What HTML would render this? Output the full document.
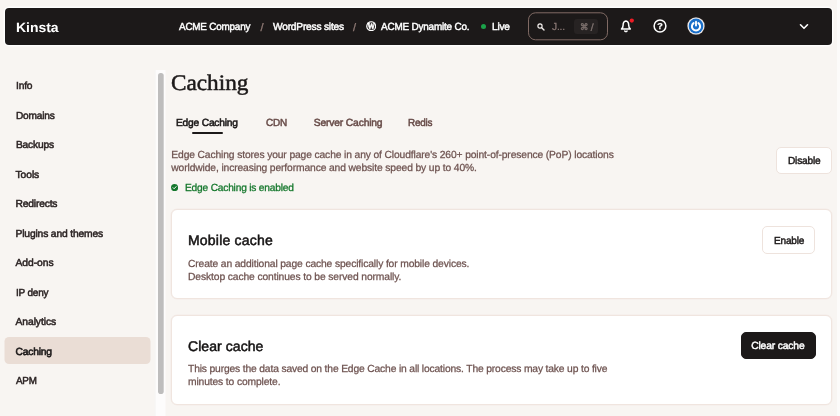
<!DOCTYPE html>
<html><head><meta charset="utf-8"><title>Caching</title>
<style>
*{box-sizing:border-box;margin:0;padding:0}
html,body{width:840px;height:416px;overflow:hidden;background:#f8f5f2}
#root{position:absolute;left:0;top:0;width:840px;height:416px;background:#f8f5f2;font-family:"Liberation Sans",sans-serif;color:#1c1919;will-change:transform;overflow:hidden}
.abs{position:absolute}
.t{position:absolute;white-space:pre;text-rendering:geometricPrecision}
#hdr{position:absolute;left:5px;top:8px;width:827px;height:37px;background:#1c1919;border-radius:4px;box-shadow:0 0 0 1.4px #fefefd}
#search{position:absolute;left:528px;top:12px;width:80px;height:28px;border:1.6px solid #806a64;border-radius:7.5px;transform:translateY(0.3px)}
#kbd{position:absolute;left:574px;top:19px;width:24px;height:15px;background:#272323;border-radius:3px}
#active{position:absolute;left:5px;top:337px;width:146px;height:27px;transform:translateX(-0.5px);background:#eaddd5;border-radius:4.5px}
#track{position:absolute;left:154px;top:70px;width:11px;height:346px;background:#fdfcfc;border-left:1px solid #f3f1ef;transform:translateX(0.5px)}
#sb{position:absolute;left:158px;top:72.5px;width:6px;transform:scaleX(0.95);transform-origin:0 0;height:321.3px;background:#bebdbd;border-radius:2.8px}
#ul{position:absolute;left:191.5px;top:131.8px;width:31px;height:2px;background:#1c1919;border-radius:1px}
.card{position:absolute;left:170.5px;width:661.5px;background:#fff;border:1px solid #f0e5df;border-radius:6px;box-shadow:0 0 0 0.5px #f4ece8}
.btn{position:absolute;background:#fff;border:1px solid #eee3dd;border-radius:5px}
.btn.dark{background:#1c1919;border-color:#1c1919}
#rstrip{position:absolute;left:836.7px;top:0;width:3.3px;height:416px;background:#fcfbfa}
</style></head><body><div id="root">
<div id="rstrip"></div>
<div id="hdr"></div>
<div id="search"></div><div id="kbd"></div>
<svg class="abs" style="left:365.9px;top:21px" width="10.4" height="10.4" viewBox="0 0 10 10"><circle cx="5" cy="5" r="4.3" fill="#3a3636" stroke="#fff" stroke-width="1.1"/><text x="5" y="7.7" font-size="7.6" font-weight="bold" text-anchor="middle" fill="#fff" stroke="#fff" stroke-width="0.35" font-family="Liberation Serif,serif">W</text></svg>
<div class="abs" style="left:481.3px;top:24px;width:5.2px;height:5.2px;border-radius:50%;background:#1ba24a;transform:translateY(-0.1px)"></div>
<svg class="abs" style="left:537.3px;top:22.8px" width="8" height="8" viewBox="0 0 8 8"><circle cx="3" cy="3" r="2.1" fill="none" stroke="#f4f0ee" stroke-width="1.15"/><path d="M4.7 4.7 L7 7" stroke="#f4f0ee" stroke-width="1.35" stroke-linecap="round"/></svg>
<svg class="abs" style="left:618px;top:17px" width="18" height="18" viewBox="0 0 18 18"><path d="M7.9 3.9 C5.7 4.2 5.1 6.2 5.1 8.2 C5.1 10.3 4.4 11.1 3.5 12.1 L12.3 12.1 C11.4 11.1 10.7 10.3 10.7 8.2 C10.7 6.2 10.1 4.2 7.9 3.9 Z" fill="none" stroke="#fff" stroke-width="1.5" stroke-linejoin="round"/><path d="M6.7 14 Q7.9 15.2 9.1 14" fill="none" stroke="#fff" stroke-width="1.4" stroke-linecap="round"/><circle cx="13.8" cy="3.6" r="2.15" fill="#ee1c25"/></svg>
<svg class="abs" style="left:652.6px;top:19.1px" width="14" height="14" viewBox="0 0 14 14"><circle cx="7" cy="7" r="5.9" fill="none" stroke="#fff" stroke-width="1.5"/><text x="7" y="10.1" font-size="9" font-weight="bold" text-anchor="middle" fill="#fff" stroke="#fff" stroke-width="0.25" font-family="Liberation Sans,sans-serif">?</text></svg>
<svg class="abs" style="left:687.2px;top:17.3px" width="18" height="18" viewBox="0 0 18 18"><circle cx="9" cy="9" r="8.7" fill="#cfc4c0"/><circle cx="9" cy="9" r="8.1" fill="#fff"/><circle cx="9" cy="9" r="7.4" fill="#1a6fc9"/><path d="M6.6 6.1 A4.1 4.1 0 1 0 11.4 6.1" fill="none" stroke="#fff" stroke-width="2" stroke-linecap="round"/><path d="M9 4.6 V8.6" stroke="#fff" stroke-width="1.9" stroke-linecap="round"/></svg>
<svg class="abs" style="left:798.5px;top:23px" width="10" height="8" viewBox="0 0 10 8"><path d="M1.5 1.8 L5 5.3 L8.5 1.8" fill="none" stroke="#fff" stroke-width="1.6" stroke-linecap="round" stroke-linejoin="round"/></svg>

<div id="active"></div>
<div id="track"></div>
<div id="sb"></div>
<div id="ul"></div>
<svg class="abs" style="left:171.3px;top:184.2px" width="7.2" height="7.2" viewBox="0 0 8 8"><circle cx="4" cy="4" r="4" fill="#14772c"/><path d="M2.3 4.1 L3.5 5.3 L5.7 2.9" fill="none" stroke="#fff" stroke-width="1.1" stroke-linecap="round" stroke-linejoin="round"/></svg>
<div class="btn" style="left:776px;top:147px;width:56px;height:27px"></div>
<div class="card" style="top:209px;height:90.3px"></div>
<div class="btn" style="left:762px;top:226px;width:53px;height:27.5px"></div>
<div class="card" style="top:315px;height:90.2px"></div>
<div class="btn dark" style="left:740.5px;top:332.3px;width:75px;height:26.5px"></div>
<span class="t" style="left:15.80px;top:21.00px;font-size:13.4px;line-height:13.4px;color:#ffffff;letter-spacing:0.000px;font-weight:bold;transform:scaleX(1.0406);transform-origin:0 0;">Kinsta</span>
<span class="t" style="left:179.00px;top:23.00px;font-size:10.3px;line-height:10.3px;color:#ffffff;letter-spacing:-0.200px;-webkit-text-stroke:0.45px #ffffff;transform:scaleX(0.9586);transform-origin:0 0;">ACME Company</span>
<span class="t" style="left:260.40px;top:23.00px;font-size:11px;line-height:11px;color:#8f7a75;letter-spacing:0.000px;-webkit-text-stroke:0.3px #8f7a75;">/</span>
<span class="t" style="left:272.50px;top:23.00px;font-size:10.3px;line-height:10.3px;color:#ffffff;letter-spacing:-0.200px;-webkit-text-stroke:0.45px #ffffff;transform:scaleX(0.9878);transform-origin:0 0;">WordPress sites</span>
<span class="t" style="left:353.00px;top:23.00px;font-size:11px;line-height:11px;color:#8f7a75;letter-spacing:0.000px;-webkit-text-stroke:0.3px #8f7a75;">/</span>
<span class="t" style="left:381.40px;top:23.00px;font-size:10.3px;line-height:10.3px;color:#ffffff;letter-spacing:-0.200px;-webkit-text-stroke:0.45px #ffffff;transform:scaleX(0.9651);transform-origin:0 0;">ACME Dynamite Co.</span>
<span class="t" style="left:492.00px;top:23.00px;font-size:10.3px;line-height:10.3px;color:#ffffff;letter-spacing:-0.200px;-webkit-text-stroke:0.45px #ffffff;transform:scaleX(0.9841);transform-origin:0 0;">Live</span>
<span class="t" style="left:552.30px;top:23.00px;font-size:10.3px;line-height:10.3px;color:#8d7b77;letter-spacing:-0.200px;-webkit-text-stroke:0.2px #8d7b77;transform:scaleX(0.9974);transform-origin:0 0;">J...</span>
<span class="t" style="left:579.70px;top:24.00px;font-size:9px;line-height:9px;color:#7d716e;letter-spacing:-0.200px;-webkit-text-stroke:0.45px #7d716e;font-family:'DejaVu Sans','Liberation Sans',sans-serif;transform:scaleX(0.9306);transform-origin:0 0;">⌘ /</span>
<span class="t" style="left:15.50px;top:82.00px;font-size:10.3px;line-height:10.3px;color:#2b2323;letter-spacing:-0.200px;-webkit-text-stroke:0.5px #2b2323;transform:scaleX(0.9947);transform-origin:0 0;">Info</span>
<span class="t" style="left:15.50px;top:112.00px;font-size:10.3px;line-height:10.3px;color:#2b2323;letter-spacing:-0.200px;-webkit-text-stroke:0.5px #2b2323;transform:scaleX(0.9825);transform-origin:0 0;">Domains</span>
<span class="t" style="left:15.50px;top:141.00px;font-size:10.3px;line-height:10.3px;color:#2b2323;letter-spacing:-0.200px;-webkit-text-stroke:0.5px #2b2323;transform:scaleX(0.9922);transform-origin:0 0;">Backups</span>
<span class="t" style="left:15.50px;top:171.00px;font-size:10.3px;line-height:10.3px;color:#2b2323;letter-spacing:-0.074px;-webkit-text-stroke:0.5px #2b2323;">Tools</span>
<span class="t" style="left:15.50px;top:200.00px;font-size:10.3px;line-height:10.3px;color:#2b2323;letter-spacing:-0.188px;-webkit-text-stroke:0.5px #2b2323;">Redirects</span>
<span class="t" style="left:15.50px;top:230.00px;font-size:10.3px;line-height:10.3px;color:#2b2323;letter-spacing:-0.159px;-webkit-text-stroke:0.5px #2b2323;">Plugins and themes</span>
<span class="t" style="left:15.50px;top:259.00px;font-size:10.3px;line-height:10.3px;color:#2b2323;letter-spacing:-0.043px;-webkit-text-stroke:0.5px #2b2323;">Add-ons</span>
<span class="t" style="left:15.50px;top:289.00px;font-size:10.3px;line-height:10.3px;color:#2b2323;letter-spacing:-0.200px;-webkit-text-stroke:0.5px #2b2323;transform:scaleX(0.9692);transform-origin:0 0;">IP deny</span>
<span class="t" style="left:15.50px;top:318.00px;font-size:10.3px;line-height:10.3px;color:#2b2323;letter-spacing:-0.063px;-webkit-text-stroke:0.5px #2b2323;">Analytics</span>
<span class="t" style="left:15.50px;top:348.00px;font-size:10.3px;line-height:10.3px;color:#1c1919;letter-spacing:-0.197px;-webkit-text-stroke:0.6px #1c1919;">Caching</span>
<span class="t" style="left:15.50px;top:377.00px;font-size:10.3px;line-height:10.3px;color:#2b2323;letter-spacing:-0.200px;-webkit-text-stroke:0.5px #2b2323;transform:scaleX(0.9531);transform-origin:0 0;">APM</span>
<span class="t" style="left:171.20px;top:72.00px;font-size:22.2px;line-height:22.2px;color:#1c1919;letter-spacing:0.000px;-webkit-text-stroke:0.5px #1c1919;font-family:'Liberation Serif',serif;transform:scaleX(1.0466);transform-origin:0 0;">Caching</span>
<span class="t" style="left:176.30px;top:119.00px;font-size:10.3px;line-height:10.3px;color:#1c1919;letter-spacing:-0.200px;-webkit-text-stroke:0.55px #1c1919;transform:scaleX(0.9922);transform-origin:0 0;">Edge Caching</span>
<span class="t" style="left:265.60px;top:119.00px;font-size:10.3px;line-height:10.3px;color:#684c49;letter-spacing:-0.200px;-webkit-text-stroke:0.5px #684c49;transform:scaleX(0.9675);transform-origin:0 0;">CDN</span>
<span class="t" style="left:313.80px;top:119.00px;font-size:10.3px;line-height:10.3px;color:#684c49;letter-spacing:-0.167px;-webkit-text-stroke:0.5px #684c49;">Server Caching</span>
<span class="t" style="left:408.00px;top:119.00px;font-size:10.3px;line-height:10.3px;color:#684c49;letter-spacing:-0.200px;-webkit-text-stroke:0.5px #684c49;transform:scaleX(0.9597);transform-origin:0 0;">Redis</span>
<span class="t" style="left:171.30px;top:151.00px;font-size:10.3px;line-height:10.3px;color:#6e5350;letter-spacing:-0.130px;-webkit-text-stroke:0.25px #6e5350;">Edge Caching stores your page cache in any of Cloudflare's 260+ point-of-presence (PoP) locations</span>
<span class="t" style="left:171.30px;top:164.00px;font-size:10.3px;line-height:10.3px;color:#6e5350;letter-spacing:-0.125px;-webkit-text-stroke:0.25px #6e5350;">worldwide, increasing performance and website speed by up to 40%.</span>
<span class="t" style="left:184.70px;top:184.00px;font-size:10.3px;line-height:10.3px;color:#14772c;letter-spacing:-0.200px;-webkit-text-stroke:0.3px #14772c;transform:scaleX(0.9891);transform-origin:0 0;">Edge Caching is enabled</span>
<span class="t" style="left:787.60px;top:157.00px;font-size:10.3px;line-height:10.3px;color:#1c1919;letter-spacing:-0.200px;-webkit-text-stroke:0.45px #1c1919;transform:scaleX(0.9836);transform-origin:0 0;">Disable</span>
<span class="t" style="left:188.00px;top:233.00px;font-size:14px;line-height:14px;color:#141212;letter-spacing:0.209px;-webkit-text-stroke:0.5px #141212;">Mobile cache</span>
<span class="t" style="left:188.00px;top:260.00px;font-size:10.3px;line-height:10.3px;color:#6e5350;letter-spacing:-0.131px;-webkit-text-stroke:0.25px #6e5350;">Create an additional page cache specifically for mobile devices.</span>
<span class="t" style="left:188.00px;top:273.00px;font-size:10.3px;line-height:10.3px;color:#6e5350;letter-spacing:-0.112px;-webkit-text-stroke:0.25px #6e5350;">Desktop cache continues to be served normally.</span>
<span class="t" style="left:773.70px;top:237.00px;font-size:10.3px;line-height:10.3px;color:#1c1919;letter-spacing:-0.200px;-webkit-text-stroke:0.45px #1c1919;transform:scaleX(0.9755);transform-origin:0 0;">Enable</span>
<span class="t" style="left:188.00px;top:339.00px;font-size:14px;line-height:14px;color:#141212;letter-spacing:0.070px;-webkit-text-stroke:0.5px #141212;">Clear cache</span>
<span class="t" style="left:188.00px;top:365.00px;font-size:10.3px;line-height:10.3px;color:#6e5350;letter-spacing:-0.159px;-webkit-text-stroke:0.25px #6e5350;">This purges the data saved on the Edge Cache in all locations. The process may take up to five</span>
<span class="t" style="left:188.00px;top:378.00px;font-size:10.3px;line-height:10.3px;color:#6e5350;letter-spacing:-0.132px;-webkit-text-stroke:0.25px #6e5350;">minutes to complete.</span>
<span class="t" style="left:751.20px;top:342.00px;font-size:10.3px;line-height:10.3px;color:#ffffff;letter-spacing:-0.145px;-webkit-text-stroke:0.45px #ffffff;">Clear cache</span>
</div></body></html>
